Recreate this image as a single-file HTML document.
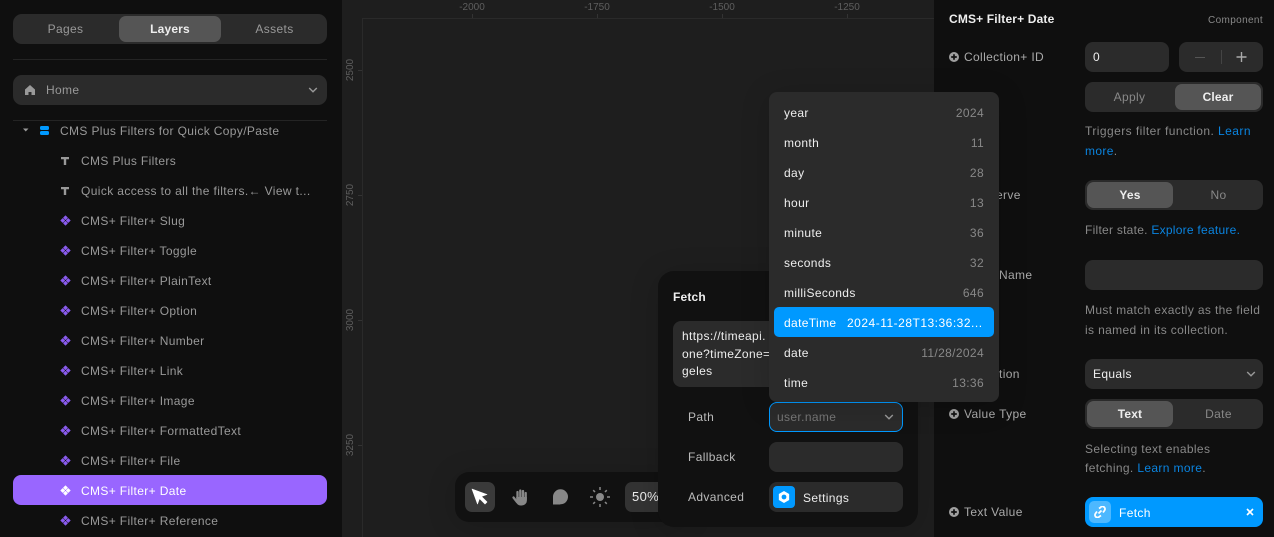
<!DOCTYPE html>
<html><head><meta charset="utf-8"><style>
*{box-sizing:border-box;margin:0;padding:0}
html,body{width:1274px;height:537px;overflow:hidden;background:#1e1e1e}
body{position:relative;font-family:"Liberation Sans",sans-serif;font-size:12px;letter-spacing:.36px}
div,span.t,svg.a{position:absolute}
.t{line-height:16px;white-space:nowrap;color:#999}
.w{color:#eee}.r{text-align:right}.c{text-align:center}
.b{font-weight:700;letter-spacing:.16px}.bl{color:#0a84e0}
.box{background:#2b2b2b;border-radius:8px}
.seg{background:#555;border-radius:7px}
.rl{color:#5e5e5e;font-size:10px;letter-spacing:0;line-height:12px}
.tk{background:#333}
.sh{box-shadow:0 4px 30px rgba(0,0,0,.16)}
</style></head><body>
<svg width="0" height="0" style="position:absolute"><defs>
<symbol id="cmp" viewBox="0 0 12 12"><path d="M6 .8 8.200 3 6 5.200 3.800 3ZM3 3.800 5.200 6 3 8.200 .8 6ZM9 3.800 11.200 6 9 8.200 6.800 6ZM6 6.800 8.200 9 6 11.200 3.800 9Z" fill="currentColor" stroke="currentColor" stroke-width=".6" stroke-linejoin="round"/></symbol>
<symbol id="txt" viewBox="0 0 10 10"><path d="M1 1h8v2.200H6.200V9H3.800V3.200H1Z" fill="currentColor"/></symbol>
<symbol id="plus" viewBox="0 0 10 10"><circle cx="5" cy="5" r="5" fill="#a0a0a0"/><path d="M5 2.200v5.600M2.200 5h5.600" stroke="#111" stroke-width="1.700"/></symbol>
<symbol id="chev" viewBox="0 0 10 10"><path d="M1.200 3 5 6.800 8.800 3" fill="none" stroke="currentColor" stroke-width="1.400"/></symbol>
</defs></svg>

<!-- Canvas -->
<div style="left:343px;top:0;width:591px;height:537px;background:#1e1e1e"></div>
<div style="left:362px;top:18px;width:572px;height:1px;background:#2a2a2a"></div>
<div style="left:362px;top:18px;width:1px;height:519px;background:#2a2a2a"></div>
<span class="t rl c" style="left:452px;top:2px;width:40px">-2000</span>
<span class="t rl c" style="left:577px;top:2px;width:40px">-1750</span>
<span class="t rl c" style="left:702px;top:2px;width:40px">-1500</span>
<span class="t rl c" style="left:827px;top:2px;width:40px">-1250</span>
<div class="tk" style="left:472px;top:14px;width:1px;height:4px"></div>
<div class="tk" style="left:597px;top:14px;width:1px;height:4px"></div>
<div class="tk" style="left:722px;top:14px;width:1px;height:4px"></div>
<div class="tk" style="left:847px;top:14px;width:1px;height:4px"></div>
<span class="t rl c" style="left:331px;top:64px;width:40px;transform:rotate(-90deg)">2500</span>
<span class="t rl c" style="left:331px;top:189px;width:40px;transform:rotate(-90deg)">2750</span>
<span class="t rl c" style="left:331px;top:314px;width:40px;transform:rotate(-90deg)">3000</span>
<span class="t rl c" style="left:331px;top:439px;width:40px;transform:rotate(-90deg)">3250</span>
<div class="tk" style="left:358px;top:70px;width:4px;height:1px"></div>
<div class="tk" style="left:358px;top:195px;width:4px;height:1px"></div>
<div class="tk" style="left:358px;top:320px;width:4px;height:1px"></div>
<div class="tk" style="left:358px;top:445px;width:4px;height:1px"></div>

<!-- Left panel -->
<div style="left:0;top:0;width:342px;height:537px;background:#0f0f0f"></div>
<div class="box" style="left:13px;top:14px;width:314px;height:30px;border-radius:9px"></div>
<div class="seg" style="left:119px;top:16px;width:102px;height:26px"></div>
<span class="t c" style="left:13px;top:21px;width:105px">Pages</span>
<span class="t c w b" style="left:119px;top:21px;width:102px">Layers</span>
<span class="t c" style="left:222px;top:21px;width:105px">Assets</span>
<div style="left:13px;top:59px;width:314px;height:1px;background:#242424"></div>
<div class="box" style="left:13px;top:75px;width:314px;height:30px;border-radius:9px"></div>
<svg class="a" style="left:25px;top:85px" width="10" height="10" viewBox="0 0 10 10"><path d="M5 0 10 4.500V10H6.500V7h-3v3H0V4.500Z" fill="#999"/></svg>
<span class="t" style="left:46px;top:82px">Home</span>
<svg class="a" style="left:308px;top:85px;color:#999" width="10" height="10"><use href="#chev"/></svg>
<div style="left:13px;top:120px;width:314px;height:1px;background:#242424"></div>
<svg class="a" style="left:23px;top:127px" width="6" height="6"><path d="M0 1.500h5.500L2.750 4.500Z" fill="#999"/></svg>
<div style="left:40px;top:126px;width:9px;height:4px;background:#09f;border-radius:1.500px"></div>
<div style="left:40px;top:131px;width:9px;height:4px;background:#09f;border-radius:1.500px"></div>
<span class="t" style="left:60px;top:123px">CMS Plus Filters for Quick Copy/Paste</span>
<svg class="a" style="left:60px;top:156px;color:#999" width="10" height="10"><use href="#txt"/></svg>
<span class="t" style="left:81px;top:153px">CMS Plus Filters</span>
<svg class="a" style="left:60px;top:186px;color:#999" width="10" height="10"><use href="#txt"/></svg>
<span class="t" style="left:81px;top:183px;letter-spacing:.38px">Quick access to all the filters.← View t...</span>

<svg class="a" style="left:60px;top:215px;color:#8b5cf0" width="11" height="11"><use href="#cmp"/></svg><span class="t" style="left:81px;top:213px">CMS+ Filter+ Slug</span>
<svg class="a" style="left:60px;top:245px;color:#8b5cf0" width="11" height="11"><use href="#cmp"/></svg><span class="t" style="left:81px;top:243px">CMS+ Filter+ Toggle</span>
<svg class="a" style="left:60px;top:275px;color:#8b5cf0" width="11" height="11"><use href="#cmp"/></svg><span class="t" style="left:81px;top:273px">CMS+ Filter+ PlainText</span>
<svg class="a" style="left:60px;top:305px;color:#8b5cf0" width="11" height="11"><use href="#cmp"/></svg><span class="t" style="left:81px;top:303px">CMS+ Filter+ Option</span>
<svg class="a" style="left:60px;top:335px;color:#8b5cf0" width="11" height="11"><use href="#cmp"/></svg><span class="t" style="left:81px;top:333px">CMS+ Filter+ Number</span>
<svg class="a" style="left:60px;top:365px;color:#8b5cf0" width="11" height="11"><use href="#cmp"/></svg><span class="t" style="left:81px;top:363px">CMS+ Filter+ Link</span>
<svg class="a" style="left:60px;top:395px;color:#8b5cf0" width="11" height="11"><use href="#cmp"/></svg><span class="t" style="left:81px;top:393px">CMS+ Filter+ Image</span>
<svg class="a" style="left:60px;top:425px;color:#8b5cf0" width="11" height="11"><use href="#cmp"/></svg><span class="t" style="left:81px;top:423px">CMS+ Filter+ FormattedText</span>
<svg class="a" style="left:60px;top:455px;color:#8b5cf0" width="11" height="11"><use href="#cmp"/></svg><span class="t" style="left:81px;top:453px">CMS+ Filter+ File</span>
<div style="left:13px;top:475px;width:314px;height:30px;background:#96f;border-radius:8px"></div>
<svg class="a" style="left:60px;top:485px;color:#fff" width="11" height="11"><use href="#cmp"/></svg><span class="t" style="left:81px;top:483px;color:#fff">CMS+ Filter+ Date</span>
<svg class="a" style="left:60px;top:515px;color:#8b5cf0" width="11" height="11"><use href="#cmp"/></svg><span class="t" style="left:81px;top:513px">CMS+ Filter+ Reference</span>

<!-- Toolbar -->
<div class="sh" style="left:455px;top:472px;width:230px;height:50px;background:#111;border-radius:14px"></div>
<div style="left:465px;top:482px;width:30px;height:30px;background:#3a3a3a;border-radius:7px"></div>
<svg class="a" style="left:471px;top:488px" width="18" height="18" viewBox="0 0 18 18"><path d="M1 1 16 6.500 10.500 8.500 16 14 14 16 8.500 10.500 6.500 16Z" fill="#fff" stroke="#fff" stroke-width=".6" stroke-linejoin="round"/></svg>
<svg class="a" style="left:511px;top:488px" width="18" height="18" viewBox="0 0 18 18"><path d="M6.500 4v6M9.300 2.500v7M12 3v7M14.700 5v6M2.500 9.500 6 14" stroke="#888" stroke-width="2.300" stroke-linecap="round" fill="none"/><path d="M5.200 9h10.700v3.500a5 5 0 0 1-5 5H9.500a4.500 4.500 0 0 1-4.300-3.500Z" fill="#888"/></svg>
<svg class="a" style="left:551px;top:488px" width="18" height="18" viewBox="0 0 18 18"><circle cx="9.500" cy="8.800" r="7.500" fill="#888"/><path d="M2 8v8.500h7.500Z" fill="#888"/></svg>
<svg class="a" style="left:590px;top:487px" width="20" height="20" viewBox="0 0 20 20"><circle cx="10" cy="10" r="4" fill="#888"/><path d="M10 0v3M10 17v3M0 10h3M17 10h3M3.200 3.200l1.800 1.800M15 15l1.800 1.800M3.200 16.800 5 15M15 5l1.800-1.800" stroke="#888" stroke-width="1.500"/></svg>
<div style="left:625px;top:482px;width:50px;height:30px;background:#333;border-radius:7px"></div>
<span class="t w" style="left:632px;top:489px;font-size:13px">50%</span>

<!-- Fetch panel -->
<div class="sh" style="left:658px;top:271px;width:260px;height:256px;background:#111;border-radius:16px"></div>
<span class="t w b" style="left:673px;top:289px">Fetch</span>
<div class="box" style="left:673px;top:321px;width:230px;height:66px"></div>
<span class="t w" style="left:682px;top:328px">https://timeapi.</span>
<span class="t w" style="left:682px;top:346px">one?timeZone=</span>
<span class="t w" style="left:682px;top:363px">geles</span>
<span class="t" style="left:688px;top:409px;color:#bbb">Path</span>
<div class="box" style="left:769px;top:402px;width:134px;height:30px;border:1px solid #09f"></div>
<span class="t" style="left:777px;top:409px;color:#777">user.name</span>
<svg class="a" style="left:884px;top:412px;color:#999" width="10" height="10"><use href="#chev"/></svg>
<span class="t" style="left:688px;top:449px;color:#bbb">Fallback</span>
<div class="box" style="left:769px;top:442px;width:134px;height:30px"></div>
<span class="t" style="left:688px;top:489px;color:#bbb">Advanced</span>
<div class="box" style="left:769px;top:482px;width:134px;height:30px"></div>
<div style="left:773px;top:486px;width:22px;height:22px;background:#09f;border-radius:4px"></div>
<svg class="a" style="left:778px;top:491px" width="12" height="12" viewBox="0 0 10 10"><path d="M5 0 9.300 2.500v5L5 10 .7 7.500v-5Z" fill="#fff"/><circle cx="5" cy="5" r="2" fill="#09f"/></svg>
<span class="t w" style="left:803px;top:490px">Settings</span>

<!-- Right panel -->
<div style="left:934px;top:0;width:340px;height:537px;background:#0f0f0f"></div>
<span class="t w b" style="left:949px;top:11px">CMS+ Filter+ Date</span>
<span class="t r" style="right:11px;top:13px;font-size:10px;color:#888">Component</span>
<svg class="a" style="left:949px;top:52px" width="10" height="10"><use href="#plus"/></svg>
<span class="t" style="left:964px;top:49px;color:#aaa">Collection+ ID</span>
<div class="box" style="left:1085px;top:42px;width:84px;height:30px"></div>
<span class="t w" style="left:1093px;top:49px">0</span>
<div class="box" style="left:1179px;top:42px;width:84px;height:30px"></div>
<div style="left:1195px;top:57px;width:10px;height:1px;background:#555"></div>
<div style="left:1221px;top:50px;width:1px;height:14px;background:#444"></div>
<svg class="a" style="left:1236px;top:51px" width="11" height="12"><path d="M5.500 1v10M.5 6h10" stroke="#aaa" stroke-width="1.400"/></svg>
<div class="box" style="left:1085px;top:82px;width:178px;height:30px"></div>
<div class="seg" style="left:1175px;top:84px;width:86px;height:26px"></div>
<span class="t c" style="left:1085px;top:89px;width:89px;color:#888">Apply</span>
<span class="t c w b" style="left:1175px;top:89px;width:86px">Clear</span>
<span class="t" style="left:1085px;top:123px;color:#888;letter-spacing:.44px">Triggers filter function. <span class="bl">Learn</span></span>
<span class="t" style="left:1085px;top:143px;color:#888"><span class="bl">more</span>.</span>
<span class="t" style="left:996px;top:187px;color:#aaa">erve</span>
<div class="box" style="left:1085px;top:180px;width:178px;height:30px"></div>
<div class="seg" style="left:1087px;top:182px;width:86px;height:26px"></div>
<span class="t c w b" style="left:1087px;top:187px;width:86px">Yes</span>
<span class="t c" style="left:1174px;top:187px;width:89px;color:#888">No</span>
<span class="t" style="left:1085px;top:222px;color:#888;letter-spacing:.26px">Filter state. <span class="bl">Explore feature.</span></span>
<span class="t" style="left:999px;top:267px;color:#aaa">Name</span>
<div class="box" style="left:1085px;top:260px;width:178px;height:30px"></div>
<span class="t" style="left:1085px;top:302px;color:#888">Must match exactly as the field</span>
<span class="t" style="left:1085px;top:322px;color:#888">is named in its collection.</span>
<span class="t" style="left:999px;top:366px;color:#aaa">tion</span>
<div class="box" style="left:1085px;top:359px;width:178px;height:30px"></div>
<span class="t w" style="left:1093px;top:366px">Equals</span>
<svg class="a" style="left:1246px;top:369px;color:#999" width="10" height="10"><use href="#chev"/></svg>
<svg class="a" style="left:949px;top:409px" width="10" height="10"><use href="#plus"/></svg>
<span class="t" style="left:964px;top:406px;color:#aaa">Value Type</span>
<div class="box" style="left:1085px;top:399px;width:178px;height:30px"></div>
<div class="seg" style="left:1087px;top:401px;width:86px;height:26px"></div>
<span class="t c w b" style="left:1087px;top:406px;width:86px">Text</span>
<span class="t c" style="left:1174px;top:406px;width:89px;color:#888">Date</span>
<span class="t" style="left:1085px;top:441px;color:#888">Selecting text enables</span>
<span class="t" style="left:1085px;top:460px;color:#888">fetching. <span class="bl">Learn more</span>.</span>
<svg class="a" style="left:949px;top:507px" width="10" height="10"><use href="#plus"/></svg>
<span class="t" style="left:964px;top:504px;color:#aaa">Text Value</span>
<div style="left:1085px;top:497px;width:178px;height:30px;background:#09f;border-radius:8px"></div>
<div style="left:1089px;top:501px;width:22px;height:22px;background:#4db8ff;border-radius:5px"></div>
<svg class="a" style="left:1094px;top:506px" width="12" height="12" viewBox="0 0 12 12" fill="none" stroke="#fff" stroke-width="1.800"><path d="M5 2.500 6.500 1.500a2.200 2.200 0 0 1 4 3L9 6.500M7 9.500 5.500 10.500a2.200 2.200 0 0 1-4-3L3 5.500M4.500 7.500l3-3"/></svg>
<span class="t" style="left:1119px;top:505px;color:#fff">Fetch</span>
<svg class="a" style="left:1246px;top:508px" width="8" height="8"><path d="M1 1 7 7M7 1 1 7" stroke="#fff" stroke-width="1.600"/></svg>

<!-- Dropdown -->
<div class="sh" style="left:769px;top:92px;width:230px;height:310px;background:#2b2b2b;border-radius:8px"></div>
<div style="left:774px;top:307px;width:220px;height:30px;background:#09f;border-radius:5px"></div>
<span class="t w" style="left:784px;top:105px">year</span><span class="t r" style="right:290px;top:105px;color:#888">2024</span>
<span class="t w" style="left:784px;top:135px">month</span><span class="t r" style="right:290px;top:135px;color:#888">11</span>
<span class="t w" style="left:784px;top:165px">day</span><span class="t r" style="right:290px;top:165px;color:#888">28</span>
<span class="t w" style="left:784px;top:195px">hour</span><span class="t r" style="right:290px;top:195px;color:#888">13</span>
<span class="t w" style="left:784px;top:225px">minute</span><span class="t r" style="right:290px;top:225px;color:#888">36</span>
<span class="t w" style="left:784px;top:255px">seconds</span><span class="t r" style="right:290px;top:255px;color:#888">32</span>
<span class="t w" style="left:784px;top:285px">milliSeconds</span><span class="t r" style="right:290px;top:285px;color:#888">646</span>
<span class="t" style="left:784px;top:315px;color:#fff">dateTime</span><span class="t" style="left:847px;top:315px;color:#fff;letter-spacing:.5px">2024-11-28T13:36:32...</span>
<span class="t w" style="left:784px;top:345px">date</span><span class="t r" style="right:290px;top:345px;color:#888">11/28/2024</span>
<span class="t w" style="left:784px;top:375px">time</span><span class="t r" style="right:290px;top:375px;color:#888">13:36</span>
</body></html>
